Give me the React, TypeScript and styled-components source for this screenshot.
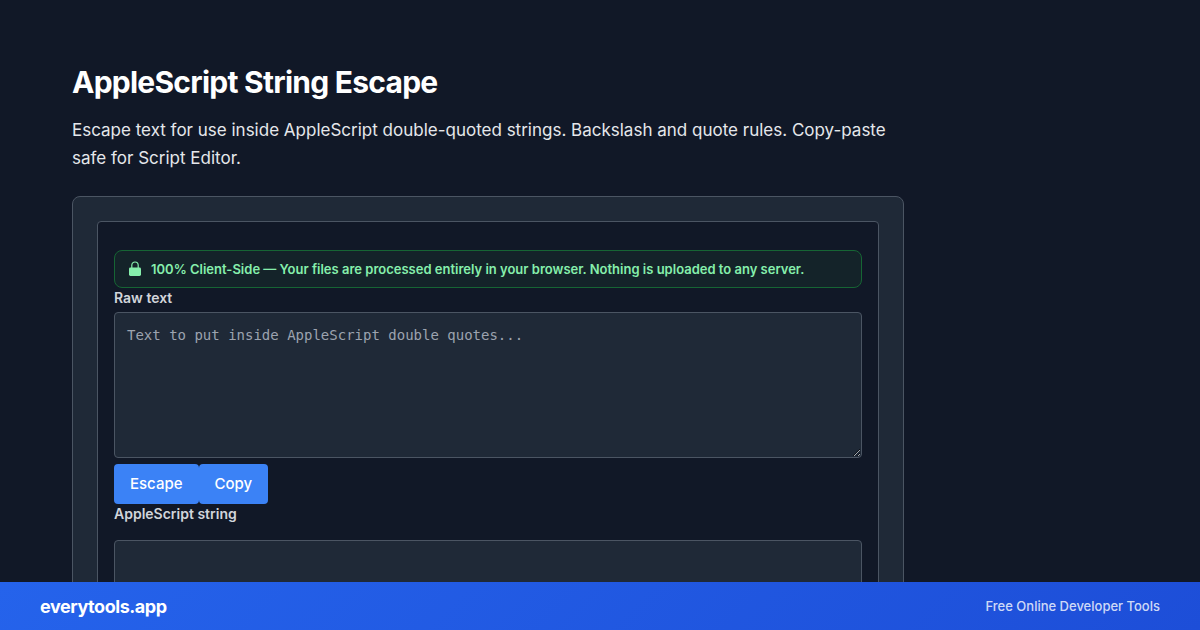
import React from "react";
import styled, { createGlobalStyle } from "styled-components";

const sans = `Inter, "Liberation Sans", sans-serif`;
const mono = `"DejaVu Sans Mono", monospace`;

const GlobalStyle = createGlobalStyle`
  *, *::before, *::after { box-sizing: border-box; }
  html, body { margin: 0; background: #111827; }
  body { font-family: ${sans}; color: #e5e7eb; }
`;

const Page = styled.div`
  display: flex;
  flex-direction: column;
  height: 100vh;
  overflow: hidden;
`;

const Content = styled.main`
  flex: 1;
  min-height: 0;
  overflow: hidden;
  padding: 64px 72px 0;
`;

const Column = styled.div`
  max-width: 832px;
`;

const Title = styled.h1`
  margin: 0 0 16px;
  font-size: 30px;
  line-height: 36px;
  font-weight: 700;
  letter-spacing: -0.025em;
  color: #ffffff;
`;

const Description = styled.p`
  margin: 0 0 24px;
  font-size: 17px;
  line-height: 28px;
`;

const Panel = styled.section`
  padding: 24px;
  border: 1px solid #4b5563;
  border-radius: 8px;
  background: #1f2937;
`;

const Tool = styled.form`
  display: flex;
  flex-direction: column;
  padding: 28px 16px;
  border: 1px solid #4b5563;
  border-radius: 4px;
  background: #111827;
`;

const Notice = styled.div`
  display: flex;
  align-items: center;
  gap: 8px;
  padding: 8px 12px;
  border: 1px solid #166534;
  border-radius: 8px;
  background: #142329;
  color: #86efac;
  font-size: 13px;
  line-height: 20px;
  font-weight: 600;
`;

const Lock = styled.svg`
  width: 16px;
  height: 16px;
  flex: none;
`;

const Label = styled.label`
  font-size: 14px;
  line-height: 20px;
  font-weight: 600;
  color: #d1d5db;
`;

const TextBox = styled.textarea<{ $gap: number }>`
  display: block;
  width: 100%;
  height: 146px;
  margin: ${({ $gap }) => $gap}px 0 6px;
  padding: 12px;
  border: 1px solid #4b5563;
  border-radius: 4px;
  background: #1f2937;
  color: #f3f4f6;
  font-family: ${mono};
  font-size: 14px;
  line-height: 20px;
  resize: vertical;
  &::placeholder { color: #9ca3af; opacity: 1; }
`;

const Actions = styled.div`
  display: flex;
`;

const Button = styled.button`
  padding: 8px 16px;
  border: 0;
  border-radius: 4px;
  background: #3b82f6;
  color: #ffffff;
  font-family: ${sans};
  font-size: 15px;
  line-height: 24px;
  font-weight: 500;
`;

const Footer = styled.footer`
  display: flex;
  align-items: center;
  justify-content: space-between;
  height: 48px;
  padding: 0 40px;
  background: linear-gradient(135deg, #2563eb, #1d4ed8);
`;

const Brand = styled.span`
  font-size: 18px;
  font-weight: 700;
  letter-spacing: -0.025em;
  color: #ffffff;
`;

const Tagline = styled.span`
  font-size: 13px;
  line-height: 20px;
  font-weight: 500;
  color: rgba(255, 255, 255, 0.8);
`;

export default function App() {
  return (
    <Page>
      <GlobalStyle />
      <Content>
        <Column>
          <Title>AppleScript String Escape</Title>
          <Description>
            Escape text for use inside AppleScript double-quoted strings. Backslash and quote rules. Copy-paste safe for
            Script Editor.
          </Description>
          <Panel>
            <Tool onSubmit={(e) => e.preventDefault()}>
              <Notice>
                <Lock viewBox="0 0 16 16" aria-hidden="true">
                  <path d="M4.8 8V4.2a3.2 3.2 0 0 1 6.4 0V8" fill="none" stroke="currentColor" strokeWidth="1.2" />
                  <rect x="2" y="6.5" width="12" height="8.5" rx="1.4" fill="currentColor" />
                </Lock>
                <span>
                  100% Client-Side — Your files are processed entirely in your browser. Nothing is uploaded to any
                  server.
                </span>
              </Notice>
              <Label htmlFor="raw">Raw text</Label>
              <TextBox id="raw" $gap={4} placeholder="Text to put inside AppleScript double quotes..." />
              <Actions>
                <Button type="submit">Escape</Button>
                <Button type="button">Copy</Button>
              </Actions>
              <Label htmlFor="result">AppleScript string</Label>
              <TextBox id="result" $gap={16} readOnly />
            </Tool>
          </Panel>
        </Column>
      </Content>
      <Footer>
        <Brand>everytools.app</Brand>
        <Tagline>Free Online Developer Tools</Tagline>
      </Footer>
    </Page>
  );
}
